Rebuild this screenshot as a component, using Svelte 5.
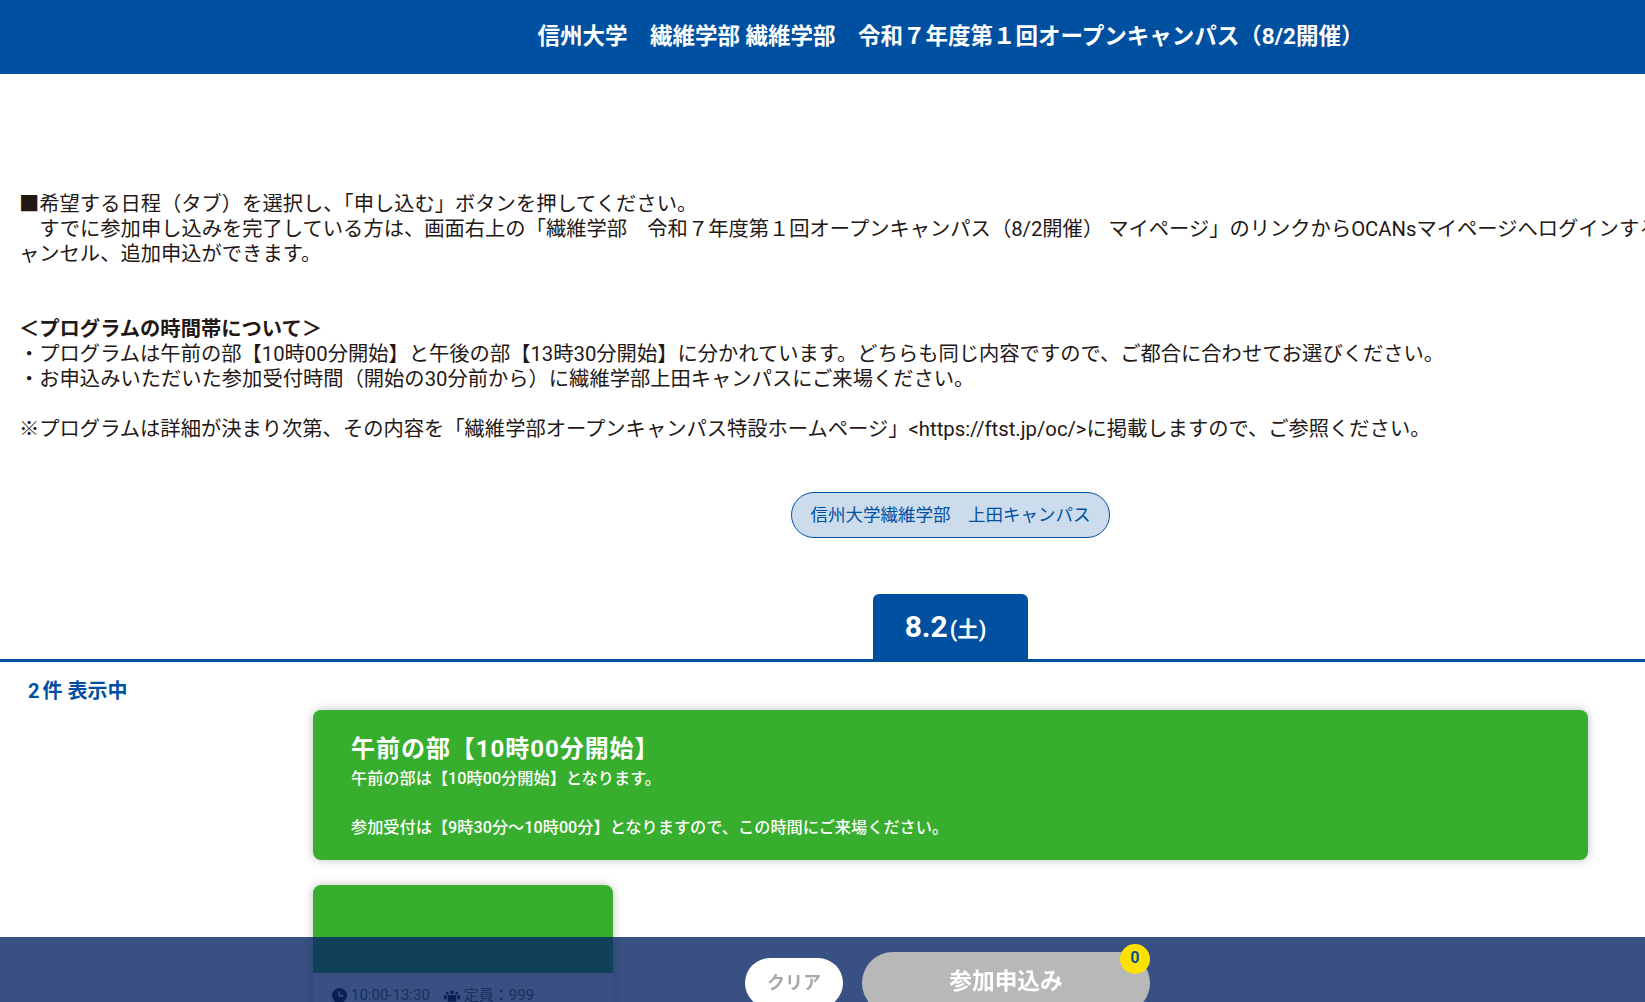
<script lang="ts">
  const intro = [
    '■希望する日程（タブ）を選択し、「申し込む」ボタンを押してください。',
    '　すでに参加申し込みを完了している方は、画面右上の「繊維学部　令和７年度第１回オープンキャンパス（8/2開催） マイページ」のリンクからOCANsマイページへログインすることで、申込内容の確認、変更、キ',
    'ャンセル、追加申込ができます。'
  ];
  const notes = [
    '・プログラムは午前の部【10時00分開始】と午後の部【13時30分開始】に分かれています。どちらも同じ内容ですので、ご都合に合わせてお選びください。',
    '・お申込みいただいた参加受付時間（開始の30分前から）に繊維学部上田キャンパスにご来場ください。'
  ];
</script>

<div class="page">
  <header class="top">信州大学　繊維学部 繊維学部　令和７年度第１回オープンキャンパス（8/2開催）</header>

  <section class="lead">
    <p>{#each intro as line}{line}<br />{/each}</p>
    <p class="sub"><strong>＜プログラムの時間帯について＞</strong><br />{#each notes as line}{line}<br />{/each}</p>
    <p>※プログラムは詳細が決まり次第、その内容を「繊維学部オープンキャンパス特設ホームページ」&lt;https://ftst.jp/oc/&gt;に掲載しますので、ご参照ください。</p>
  </section>

  <div class="campus"><span class="pill">信州大学繊維学部　上田キャンパス</span></div>

  <div class="tabs">
    <div class="tab"><b>8.2</b><small>(土)</small></div>
  </div>

  <div class="count"><span>2</span>件 表示中</div>

  <main class="list">
    <div class="group">
      <h2>午前の部【10時00分開始】</h2>
      <p>午前の部は【10時00分開始】となります。<br /><br />参加受付は【9時30分～10時00分】となりますので、この時間にご来場ください。</p>
    </div>

    <article class="card">
      <div class="thumb"></div>
      <div class="meta">
        <svg viewBox="0 0 16 16" width="15" height="15"><path fill="currentColor" fill-rule="evenodd" d="M8 0a8 8 0 1 1 0 16A8 8 0 0 1 8 0zM7 3.500V9h5V7.400H8.700V3.500z" /></svg>
        <span>10:00-13:30</span>
        <svg class="people" viewBox="0 0 18 16" width="16" height="15"><path fill="currentColor" d="M9 2.200a2.100 2.100 0 1 1 0 4.200 2.100 2.100 0 0 1 0-4.200zM3.600 3.400a1.700 1.700 0 1 1 0 3.400 1.700 1.700 0 0 1 0-3.400zm10.800 0a1.700 1.700 0 1 1 0 3.400 1.700 1.700 0 0 1 0-3.400zM5.600 7.400h6.800c.9 0 1.500.7 1.500 1.500V15H4.100V8.900c0-.8.600-1.500 1.500-1.500zM0 8.600c0-.6.500-1 1-1h2.600c-.4.400-.6.900-.6 1.500v3H0zm18 0v3.500h-3v-3c0-.6-.2-1.100-.6-1.500H17c.5 0 1 .4 1 1z" /></svg>
        <span>定員：999</span>
      </div>
    </article>
  </main>

  <footer class="bar">
    <button class="clear">クリア</button>
    <button class="apply">参加申込み<span class="badge">0</span></button>
  </footer>
</div>

<style>
  :global(html), :global(body) { margin: 0; overflow: hidden; height: 100%; }
  .page { width: 1901px; color: #231815; font-family: Roboto, "Noto Sans CJK JP", sans-serif; font-size: 20.300px; line-height: 25px; }
  .top { height: 74px; background: #0050a2; color: #fff; font-size: 22.500px; font-weight: 700; line-height: 72px; text-align: center; box-sizing: border-box; }
  .lead { padding: 117.500px 19px 0; white-space: nowrap; }
  .lead p { margin: 0; }
  .lead strong { font-weight: 700; }
  .lead .sub { margin: 50px 0 25px; }
  .campus { display: flex; justify-content: center; margin-top: 50px; }
  .pill { border: 1px solid #0050a2; border-radius: 24px; background: #ccdcec; color: #0050a2; font-size: 17.500px; line-height: 44px; padding: 0 18.500px; }
  .tabs { display: flex; justify-content: center; margin-top: 56px; border-bottom: 3px solid #0050a2; }
  .tab { width: 155px; height: 65px; background: #0050a2; color: #fff; border-radius: 6px 6px 0 0; display: flex; align-items: baseline; justify-content: center; padding-top: 17.500px; padding-right: 10px; box-sizing: border-box; line-height: 32px; }
  .tab b { font-size: 30px; font-weight: 700; }
  .tab small { font-size: 21.500px; font-weight: 700; margin-left: 2px; }
  .count { padding: 17px 0 0 28px; color: #0050a2; font-size: 20px; font-weight: 700; }
  .count span { margin-right: 3px; }
  .list { width: 1275px; margin: 6px auto 0; }
  .group { height: 150px; box-sizing: border-box; padding: 22px 38px 0; background: #37ae2e; color: #fff; border-radius: 8px; box-shadow: 0 0 10px rgba(0, 0, 0, 0.25); }
  .group h2 { margin: 0; font-size: 24px; font-weight: 700; line-height: 35px; letter-spacing: 0.04em; }
  .group p { margin: 0; font-size: 16.200px; font-weight: 500; line-height: 24.500px; }
  .card { width: 300px; margin-top: 25px; background: #fff; border-radius: 8px 8px 0 0; box-shadow: 0 0 10px rgba(0, 0, 0, 0.25); }
  .thumb { height: 88px; background: #37ae2e; border-radius: 8px 8px 0 0; }
  .meta { display: flex; align-items: center; padding: 10px 19px; font-size: 15px; color: #555; }
  .meta svg { margin-right: 4px; flex: none; color: #111; }
  .meta .people { margin-left: 14px; }
  .bar { position: fixed; left: 0; bottom: 0; width: 1895px; height: 65px; overflow: hidden; display: flex; justify-content: center; align-items: flex-start; gap: 19px; background: rgba(8, 38, 99, 0.8); }
  button { border: 0; padding: 0; font-family: inherit; font-weight: 700; }
  .clear { width: 98px; height: 50px; margin-top: 21px; padding-bottom: 5px; border-radius: 25px; background: #fff; color: #a9a9a9; font-size: 18px; }
  .apply { position: relative; width: 288px; height: 62px; margin-top: 15px; padding-bottom: 7px; border-radius: 31px; background: #b8b8b8; color: #fff; font-size: 22.700px; }
  .badge { position: absolute; top: -8px; right: 0; width: 30px; height: 30px; border-radius: 50%; background: #ffe100; color: #0050a2; font-size: 16px; line-height: 28px; text-align: center; }
</style>
